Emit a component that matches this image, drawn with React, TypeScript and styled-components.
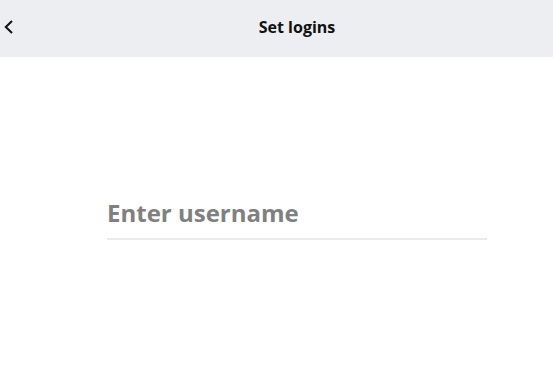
import styled, { createGlobalStyle } from 'styled-components';

const GlobalStyle = createGlobalStyle`
  body {
    margin: 0;
    background: #ffffff;
    font-family: "Open Sans", sans-serif;
  }
`;

function App() {
  return (
    <>
      <GlobalStyle />
      <Page>
        <Header>
          <BackButton aria-label="Back">
            <svg width="14" height="16" viewBox="0 0 14 16" fill="none">
              <path d="M11 2 L4.8 8 L11 14" stroke="#111" strokeWidth="2" />
            </svg>
          </BackButton>
          <Title>Set logins</Title>
        </Header>
        <Body>
          <Field>
            <Input placeholder="Enter username" />
          </Field>
        </Body>
      </Page>
    </>
  );
}

export default App;

const Page = styled.div`
  display: flex;
  flex-direction: column;
  width: 553px;
  height: 390px;
`;

const Header = styled.header`
  position: relative;
  display: flex;
  align-items: center;
  justify-content: center;
  height: 57px;
  padding-left: 41px;
  background-color: #edeef2;
`;

const BackButton = styled.button`
  position: absolute;
  left: 1px;
  top: 19px;
  display: flex;
  padding: 0;
  border: none;
  background: none;
`;

const Title = styled.h1`
  margin: 0;
  font-size: 16px;
  font-weight: 700;
  color: #111;
  padding-bottom: 3px;
`;

const Body = styled.main`
  display: flex;
  padding-top: 139px;
  padding-left: 107px;
`;

const Field = styled.div`
  width: 380px;
  border-bottom: 2px solid #ebebeb;
`;

const Input = styled.input`
  display: block;
  width: 100%;
  box-sizing: border-box;
  border: none;
  outline: none;
  padding: 0 0 9px 0;
  font-family: "Open Sans", sans-serif;
  font-size: 24px;
  font-weight: 700;
  color: #333;

  &::placeholder {
    color: #808080;
  }
`;
